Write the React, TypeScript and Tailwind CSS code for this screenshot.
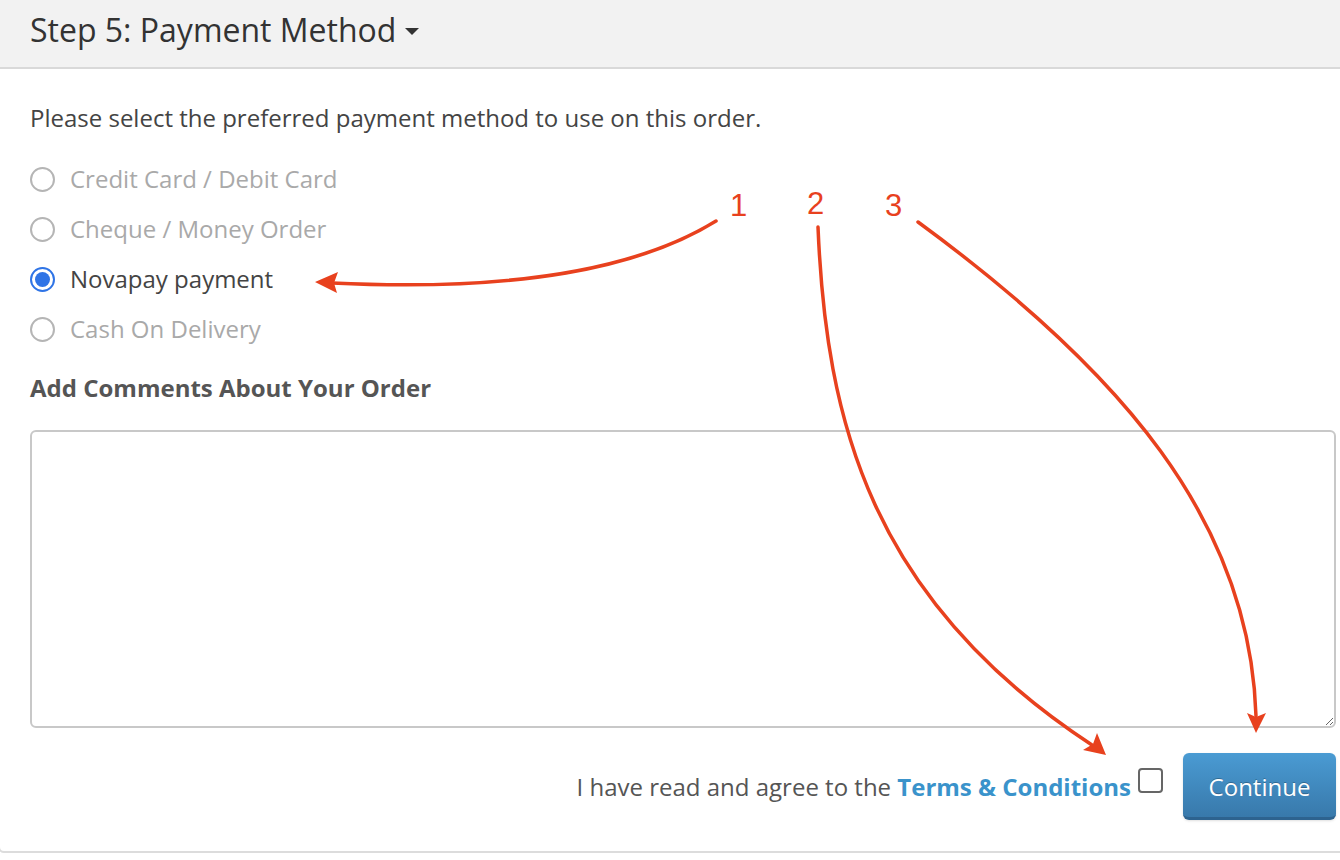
import { useState } from "react";

const methods = [
    { id: "card", label: "Credit Card / Debit Card" },
    { id: "cheque", label: "Cheque / Money Order" },
    { id: "novapay", label: "Novapay payment" },
    { id: "cod", label: "Cash On Delivery" },
];

function Radio({ checked }: { readonly checked: boolean }) {
    if (checked) {
        return (
            <span className="flex h-[25px] w-[25px] items-center justify-center rounded-full border-2 border-[#2f74e6] bg-white">
                <span className="h-[15px] w-[15px] rounded-full bg-[#2f74e6]" />
            </span>
        );
    }

    return <span className="h-[25px] w-[25px] rounded-full border-2 border-[#b5b5b5] bg-white" />;
}

function Annotations() {
    return (
        <svg
            className="pointer-events-none absolute left-0 top-0"
            height="860"
            viewBox="0 0 1340 860"
            width="1340"
        >
            <g fill="none" stroke="#e8411e" strokeLinecap="round" strokeWidth="3.5">
                <path d="M716 221 C 640 268 520 292 332 283" />
                <path d="M818 227 C 826 420 870 600 1092 745" />
                <path d="M918 222 C 1120 370 1250 520 1256 716" />
            </g>
            <g fill="#e8411e">
                <path d="M315 282 L 338 272 L 334 283 L 337 293 Z" />
                <path d="M1106 755 L 1083 750 L 1093 744 L 1097 733 Z" />
                <path d="M1256 733 L 1247 713 L 1256 717 L 1266 713 Z" />
            </g>
            <g fill="#e8411e" fontFamily="'Liberation Sans', Arial, sans-serif" fontSize="31">
                <text x="730" y="216">1</text>
                <text x="807" y="214">2</text>
                <text x="885" y="216">3</text>
            </g>
        </svg>
    );
}

export default function App() {
    const [selected, setSelected] = useState("novapay");

    return (
        <div className="relative h-[860px] w-[1340px] overflow-hidden bg-white font-['Open_Sans',sans-serif] text-[#444]">
            <div className="-ml-[2px] -mt-[2px] w-[1380px] rounded-[6px] border-2 border-[#dcdcdc]">
                <div className="flex h-[69px] items-center border-b-2 border-[#d9d9d9] bg-[#f2f2f2] pb-[8px] pl-[30px]">
                    <h2 className="text-[32px] leading-[38px] text-[#333]">Step 5: Payment Method</h2>
                    <span className="ml-[9px] mt-[4px] h-0 w-0 border-x-[7px] border-t-[7px] border-x-transparent border-t-[#333]" />
                </div>

                <div className="pb-[31px] pl-[30px] pr-[40px] pt-[34px]">
                    <p className="text-[24px] leading-[30px]">
                        Please select the preferred payment method to use on this order.
                    </p>

                    <div className="mt-[21px]">
                        {methods.map((method) => {
                            const isChecked = method.id === selected;

                            return (
                                <label
                                    className="flex h-[50px] cursor-pointer items-center gap-[15px]"
                                    key={method.id}
                                    onClick={() => setSelected(method.id)}
                                >
                                    <Radio checked={isChecked} />
                                    <span
                                        className={
                                            isChecked
                                                ? "text-[24px] leading-[30px] text-[#444]"
                                                : "text-[24px] leading-[30px] text-[#a9a9a9]"
                                        }
                                    >
                                        {method.label}
                                    </span>
                                </label>
                            );
                        })}
                    </div>

                    <h3 className="mt-[19px] text-[24px] font-bold leading-[30px] text-[#555]">
                        Add Comments About Your Order
                    </h3>

                    <textarea className="mt-[27px] block h-[298px] w-full resize-y rounded-[6px] border-2 border-[#c8c8c8] outline-none" />

                    <div className="mt-[25px] flex items-center justify-end">
                        <span className="text-[24px] leading-[30px] text-[#555]">
                            I have read and agree to the{" "}
                            <a className="font-bold text-[#3a93cb]" href="#terms">
                                Terms &amp; Conditions
                            </a>
                        </span>
                        <span className="mb-[12px] ml-[7px] h-[25px] w-[25px] rounded-[4px] border-2 border-[#666] bg-white" />
                        <button
                            className="ml-[20px] h-[67px] w-[153px] rounded-[6px] border-b-[3px] border-[#2d638f] bg-gradient-to-b from-[#4a9bd3] to-[#3879ab] pt-[4px] text-[24px] text-white [text-shadow:0_-1px_0_rgba(0,0,0,0.25)] shadow-sm"
                            type="button"
                        >
                            Continue
                        </button>
                    </div>
                </div>
            </div>

            <Annotations />
        </div>
    );
}
